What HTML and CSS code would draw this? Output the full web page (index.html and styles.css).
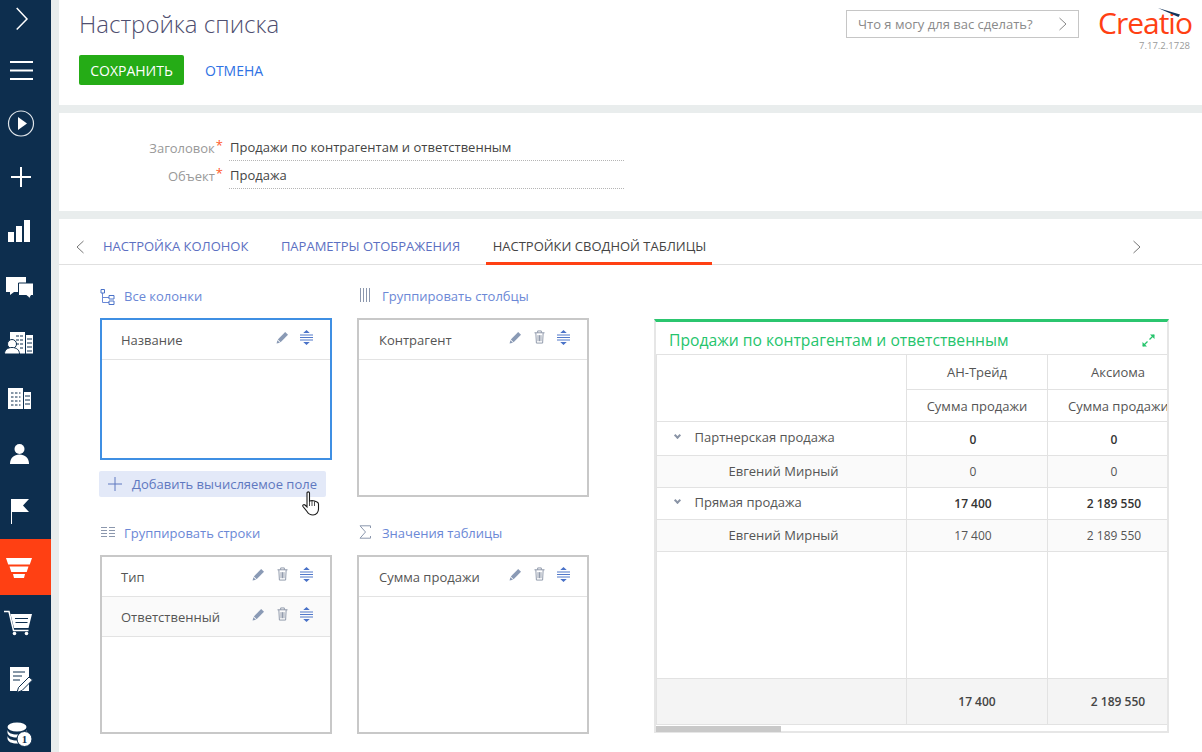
FILE: index.html
```html
<!DOCTYPE html>
<html lang="ru">
<head>
  <meta charset="UTF-8">
  <title>Настройка списка</title>
  <link rel="stylesheet" href="styles.css">
</head>
<body>

  <svg class="defs" width="0" height="0">
    <symbol id="pencil" viewBox="0 0 13 13">
      <path d="M9.200 1 12 3.800 4.600 11.200 1.800 8.400Z" fill="currentColor"/>
      <path d="M1.400 9.200 4 11.700 0.600 12.500Z" fill="currentColor"/>
    </symbol>
    <symbol id="trash" viewBox="0 0 12 15" preserveAspectRatio="none">
      <path d="M.5 3h11M4 3V1h4v2M2 3l.6 11h6.800L10 3M4.400 5.500v6.500M6 5.500v6.500M7.600 5.500v6.500" fill="none" stroke="currentColor"/>
    </symbol>
    <symbol id="sort" viewBox="0 0 14 15" preserveAspectRatio="none">
      <path d="M7 0 10.500 3h-7ZM7 15 3.500 12h7Z" fill="currentColor"/>
      <path d="M0 5h14M0 7.500h14M0 10h14" stroke="currentColor"/>
    </symbol>
    <symbol id="chevron" viewBox="0 0 10 14">
      <path d="M1.500 1 8 7l-6.500 6" fill="none" stroke="currentColor"/>
    </symbol>
  </svg>

  <nav class="sidebar">
    <a class="nav-item nav-top">
      <svg width="51" height="44" viewBox="0 0 51 44"><path d="M16.700 8 27 19 16.700 29.500" fill="none" stroke="#fff" stroke-width="1.500"/></svg>
    </a>
    <a class="nav-item nav-short">
      <svg width="51" height="53" viewBox="0 0 51 53"><path d="M10 18h23M10 26.500h23M10 35h23" stroke="#fff" stroke-width="2"/></svg>
    </a>
    <a class="nav-item nav-short">
      <svg width="51" height="53" viewBox="0 0 51 53"><circle cx="21" cy="26.500" r="12.500" fill="none" stroke="#dfe5ea" stroke-width="1.200"/><path d="M18 20l9 6.500-9 6.500Z" fill="#fff"/></svg>
    </a>
    <a class="nav-item nav-short">
      <svg width="51" height="53" viewBox="0 0 51 53"><path d="M11 27h20M21 17v20" stroke="#fff" stroke-width="2"/></svg>
    </a>
    <a class="nav-item">
      <svg width="51" height="56" viewBox="0 0 51 56"><path d="M8 29h6v10H8ZM16 23h6v16h-6ZM24 17h6v22h-6Z" fill="#fff"/></svg>
    </a>
    <a class="nav-item">
      <svg width="51" height="56" viewBox="0 0 51 56"><path d="M6 18h20v15H14l-4 3v-3H6Z" fill="#fff"/><path d="M18.500 24h15v12.500h-2.500l-1 3-3.500-3h-8Z" fill="#fff" stroke="#0d2e4e"/></svg>
    </a>
    <a class="nav-item">
      <svg width="51" height="56" viewBox="0 0 51 56"><path d="M10 17h15v21.500H10ZM26 20h7v18.500h-7Z" fill="#fff"/><path d="M16 21h3M20 21h3M16 25h3M20 25h3M16 29h3M20 29h3M20 33h3M27 24h5M27 28h5M27 32h5M27 36h5" stroke="#0d2e4e"/><circle cx="12" cy="29" r="4.500" fill="#fff" stroke="#0d2e4e"/><path d="M4.500 39c0-4 3-6.500 7.500-6.500s7.500 2.500 7.500 6.500Z" fill="#fff" stroke="#0d2e4e"/></svg>
    </a>
    <a class="nav-item">
      <svg width="51" height="56" viewBox="0 0 51 56"><path d="M8 17h15v21H8ZM24 21h7v17h-7Z" fill="#fff"/><path d="M11 22h2.500M15 22h2.500M19 22h1.500M11 26h2.500M15 26h2.500M19 26h1.500M11 30h2.500M15 30h2.500M19 30h1.500M11 34h2.500M15 34h2.500M19 34h1.500M25 25h5M25 29h5M25 33h5" stroke="#0d2e4e"/></svg>
    </a>
    <a class="nav-item">
      <svg width="51" height="56" viewBox="0 0 51 56"><circle cx="19.500" cy="22" r="5" fill="#fff"/><path d="M10 37c0-6 4-9.500 9.500-9.500s9.500 3.500 9.500 9.500Z" fill="#fff"/></svg>
    </a>
    <a class="nav-item">
      <svg width="51" height="56" viewBox="0 0 51 56"><path d="M11 16h1v25h-1Z" fill="#fff"/><path d="M12 16h17l-6 6.500 6 6.500H12Z" fill="#fff"/></svg>
    </a>
    <a class="nav-item nav-active">
      <svg width="51" height="56" viewBox="0 0 51 56"><path d="M6 19h26l-2.200 6.500H8.200ZM9.500 27.500h19l-1.800 5.500H11.300ZM13 35h12l-1 4H14Z" fill="#fff"/></svg>
    </a>
    <a class="nav-item">
      <svg width="51" height="56" viewBox="0 0 51 56"><path d="M4 16.500h5l4.500 19h15" fill="none" stroke="#fff" stroke-width="1.500"/><path d="M10.500 19H32l-3.500 14H14Z" fill="#fff"/><path d="M15 23.500h13M15.500 27.500h12" stroke="#0d2e4e"/><circle cx="14.500" cy="38.500" r="1.800" fill="#fff"/><circle cx="26.500" cy="38.500" r="1.800" fill="#fff"/></svg>
    </a>
    <a class="nav-item">
      <svg width="51" height="56" viewBox="0 0 51 56"><path d="M10 16h19v24H10Z" fill="#fff"/><path d="M13 21h12M13 25h9M13 29h7" stroke="#0d2e4e"/><path d="M29 26l3.500 3-10.500 10.500-5 2 1.500-5Z" fill="#fff" stroke="#0d2e4e"/></svg>
    </a>
    <a class="nav-item">
      <svg width="51" height="56" viewBox="0 0 51 56"><ellipse cx="17" cy="20" rx="9.500" ry="4.500" fill="#fff"/><path d="M7.500 23c1 3 4 4.500 9.500 4.500s8.500-1.500 9.500-4.500v3c-1 3-4 4.500-9.500 4.500S8.500 29 7.500 26ZM7.500 29c1 3 4 4.500 9.500 4.500S25.500 32 26.500 29v3c-1 3-4 4.500-9.500 4.500S8.500 35 7.500 32Z" fill="#fff"/><circle cx="24.500" cy="32" r="7.500" fill="#fff" stroke="#0d2e4e"/><text class="coin-num" x="24.500" y="36">1</text></svg>
    </a>
  </nav>

  <main class="page">

    <header class="top">
      <div class="top-left">
        <h1 class="page-title">Настройка списка</h1>
        <div class="actions">
          <button class="btn-save">СОХРАНИТЬ</button>
          <a class="link-cancel">ОТМЕНА</a>
        </div>
      </div>
      <div class="search">
        <span>Что я могу для вас сделать?</span>
        <svg class="search-arrow" width="10" height="14"><use href="#chevron"/></svg>
      </div>
      <div class="logo">
        <svg class="logo-swoosh" width="22" height="9" viewBox="0 0 22 9"><path d="M0 0 22 6.500 20.500 9 9 4Z" fill="#14345a"/></svg>
        <div class="logo-text">Creatio</div>
        <div class="version">7.17.2.1728</div>
      </div>
    </header>

    <section class="form">
      <div class="form-row">
        <label class="form-label">Заголовок<span class="req">*</span></label>
        <div class="form-value">Продажи по контрагентам и ответственным</div>
      </div>
      <div class="form-row">
        <label class="form-label">Объект<span class="req">*</span></label>
        <div class="form-value">Продажа</div>
      </div>
    </section>

    <section class="settings">
      <div class="tabs">
        <svg class="tab-arrow tab-prev" width="10" height="14"><use href="#chevron"/></svg>
        <a class="tab">Настройка колонок</a>
        <a class="tab">Параметры отображения</a>
        <a class="tab tab-active">Настройки сводной таблицы</a>
        <svg class="tab-arrow tab-next" width="10" height="14"><use href="#chevron"/></svg>
      </div>

      <div class="columns">
        <div class="col">
          <div class="col-title">
            <svg class="title-icon" width="16" height="18" viewBox="0 0 16 18"><path d="M2.500 5v9.500H9M2.500 9.500H9" fill="none" stroke="#6b88d6"/><path d="M1 1.500h3.500V5H1ZM9 7.500h5V11H9ZM9 13h5v3.500H9Z" fill="#fff" stroke="#4a72c8"/></svg>
            Все колонки
          </div>
          <div class="panel panel-focus panel-sm">
            <div class="panel-row">
              <span class="row-name">Название</span>
              <svg class="ic ic-pencil"><use href="#pencil"/></svg>
              <svg class="ic ic-sort"><use href="#sort"/></svg>
            </div>
          </div>
          <div class="add-field">
            <svg width="14" height="14" viewBox="0 0 14 14"><path d="M0 7h14M7 0v14" stroke="#5f78c0"/></svg>
            Добавить вычисляемое поле
            <svg class="cursor" width="18" height="26" viewBox="0 0 18 26"><path d="M5 2c0-1.500 2.500-1.500 2.500 0v8l2.500-.5 2.500.5 2.500 1c1 .5 1.500 1 1.500 2v5c0 3-2 6-5.500 6-3 0-4.500-1-6-3.500L1 15.500c-.8-1.200.8-2.500 2-1.500l2 2Z" fill="#fff" stroke="#1c1c1c" stroke-width="1.100"/><path d="M7.500 10v5M10 10v5M12.500 10.500v4.500" stroke="#1c1c1c" stroke-width=".8"/></svg>
          </div>
          <div class="col-title col-title-low">
            <svg class="title-icon" width="16" height="14" viewBox="0 0 16 14"><path d="M1 2.500h6M9 2.500h6M1 5.500h6M9 5.500h6M1 8.500h6M9 8.500h6M1 11.500h6M9 11.500h6" stroke="#8b97ad"/></svg>
            Группировать строки
          </div>
          <div class="panel panel-lg">
            <div class="panel-row">
              <span class="row-name">Тип</span>
              <svg class="ic ic-pencil"><use href="#pencil"/></svg>
              <svg class="ic ic-trash"><use href="#trash"/></svg>
              <svg class="ic ic-sort"><use href="#sort"/></svg>
            </div>
            <div class="panel-row row-alt">
              <span class="row-name">Ответственный</span>
              <svg class="ic ic-pencil"><use href="#pencil"/></svg>
              <svg class="ic ic-trash"><use href="#trash"/></svg>
              <svg class="ic ic-sort"><use href="#sort"/></svg>
            </div>
          </div>
        </div>

        <div class="col col-second">
          <div class="col-title">
            <svg class="title-icon" width="16" height="14" viewBox="0 0 16 14"><path d="M3.500 0v14M6.500 0v14M9.500 0v14M12.500 0v14" stroke="#8b97ad"/></svg>
            Группировать столбцы
          </div>
          <div class="panel panel-lg">
            <div class="panel-row">
              <span class="row-name">Контрагент</span>
              <svg class="ic ic-pencil"><use href="#pencil"/></svg>
              <svg class="ic ic-trash"><use href="#trash"/></svg>
              <svg class="ic ic-sort"><use href="#sort"/></svg>
            </div>
          </div>
          <div class="col-title col-title-low">
            <svg class="title-icon" width="16" height="14" viewBox="0 0 16 14"><path d="M13.500 3V.8H3l5.500 6.200L3 13.200h10.500V11" fill="none" stroke="#8b97ad"/></svg>
            Значения таблицы
          </div>
          <div class="panel panel-lg">
            <div class="panel-row">
              <span class="row-name">Сумма продажи</span>
              <svg class="ic ic-pencil"><use href="#pencil"/></svg>
              <svg class="ic ic-trash"><use href="#trash"/></svg>
              <svg class="ic ic-sort"><use href="#sort"/></svg>
            </div>
          </div>
        </div>

        <div class="pivot">
          <div class="pivot-head">
            <span class="pivot-title">Продажи по контрагентам и ответственным</span>
            <svg width="13" height="13" viewBox="0 0 13 13"><path d="M7.500 5.500 12 1M1 12l4.500-4.500" stroke="#25c46c" stroke-width="1.300"/><path d="M8 .500h4.500V5ZM.500 8v4.500H5Z" fill="#25c46c"/></svg>
          </div>
          <div class="pivot-scroll">
            <table class="pivot-table">
              <colgroup>
                <col class="c-name"><col class="c-val"><col class="c-val">
              </colgroup>
              <tr class="r-head1"><td rowspan="2"></td><td class="cell-head">АН-Трейд</td><td class="cell-head">Аксиома</td></tr>
              <tr class="r-head2"><td class="cell-head">Сумма продажи</td><td class="cell-head cell-clip">Сумма продажи</td></tr>
              <tr class="r-first">
                <td class="cell-group"><span class="caret"></span>Партнерская продажа</td>
                <td class="cell-num cell-bold">0</td><td class="cell-num cell-bold">0</td>
              </tr>
              <tr class="r-child">
                <td class="cell-child">Евгений Мирный</td>
                <td class="cell-num">0</td><td class="cell-num">0</td>
              </tr>
              <tr>
                <td class="cell-group"><span class="caret"></span>Прямая продажа</td>
                <td class="cell-num cell-bold">17 400</td><td class="cell-num cell-bold">2 189 550</td>
              </tr>
              <tr class="r-child">
                <td class="cell-child">Евгений Мирный</td>
                <td class="cell-num">17 400</td><td class="cell-num">2 189 550</td>
              </tr>
              <tr class="r-empty"><td></td><td></td><td></td></tr>
              <tr class="r-total"><td></td><td>17 400</td><td>2 189 550</td></tr>
            </table>
          </div>
          <div class="pivot-bar"><div class="pivot-thumb"></div></div>
        </div>
      </div>
    </section>

  </main>

</body>
</html>
```

FILE: styles.css
```css
* {
  box-sizing: border-box;
}
html, body {
  height: 100%;
}
body {
  margin: 0;
  display: flex;
  height: 752px;
  overflow: hidden;
  background: #e9eded;
  font-family: "Open Sans", sans-serif;
  font-size: 13px;
  color: #444;
}
.defs {
  position: absolute;
}

/* left menu */
.sidebar {
  width: 51px;
  flex: none;
  height: 752px;
  overflow: hidden;
  background: #0d2e4e;
}
.nav-item {
  display: block;
  height: 56px;
}
.nav-item svg {
  display: block;
}
.nav-top {
  height: 44px;
}
.nav-short {
  height: 53px;
}
.nav-active {
  background: #ff4013;
}
.coin-num {
  font-family: "Liberation Serif", serif;
  font-size: 11px;
  font-weight: bold;
  fill: #0d2e4e;
  text-anchor: middle;
}

.page {
  flex: 1;
  margin-left: 8px;
  display: flex;
  flex-direction: column;
  gap: 8px;
}

/* header */
.top {
  height: 105px;
  background: #fff;
  display: flex;
  align-items: flex-start;
  padding-left: 20px;
}
.top-left {
  flex: 1;
}
.page-title {
  margin: 7px 0 0;
  font-size: 24px;
  font-weight: 300;
  line-height: 34px;
  color: #4f4f70;
}
.actions {
  display: flex;
  align-items: center;
  margin-top: 14px;
}
.btn-save {
  width: 105px;
  height: 30px;
  border: none;
  border-radius: 2px;
  background: #25ac16;
  color: #fff;
  font-family: inherit;
  font-size: 14px;
  padding: 0;
}
.link-cancel {
  margin-left: 21px;
  font-size: 14px;
  color: #2f72e4;
}
.search {
  width: 233px;
  height: 28px;
  margin-top: 10px;
  border: 1px solid #c6c6c6;
  display: flex;
  align-items: center;
  justify-content: space-between;
  padding: 0 10px 0 11px;
  color: #8a8a8a;
  font-size: 13px;
}
.search-arrow {
  color: #888;
}
.logo {
  position: relative;
  width: 123px;
  padding: 5px 12px 0 19px;
  text-align: right;
}
.logo-swoosh {
  position: absolute;
  top: 8px;
  left: 79px;
}
.logo-text {
  font-size: 30px;
  line-height: 35px;
  letter-spacing: -1px;
  color: #ff4013;
  text-align: left;
}
.version {
  font-size: 9.500px;
  line-height: 12px;
  color: #9a9a9a;
}

/* form */
.form {
  height: 98px;
  background: #fff;
  padding-top: 20px;
}
.form-row {
  display: flex;
  height: 28px;
  align-items: center;
}
.form-label {
  width: 164px;
  padding-top: 1px;
  text-align: right;
  color: #999;
  font-size: 13px;
}
.req {
  color: #ff5a2b;
  margin-left: 1px;
  position: relative;
  top: -3px;
}
.form-value {
  width: 395px;
  height: 28px;
  margin-left: 6px;
  padding-left: 1px;
  line-height: 28px;
  border-bottom: 1px dotted #b5b5b5;
  color: #444;
}

/* tabs */
.settings {
  flex: 1;
  background: #fff;
}
.tabs {
  position: relative;
  height: 46px;
  display: flex;
  border-bottom: 1px solid #e0e0e0;
  padding-left: 37px;
  align-items: stretch;
}
.tab {
  padding: 0 7px;
  margin-right: 18.500px;
  line-height: 54px;
  text-transform: uppercase;
  font-size: 13px;
  color: #5c70c2;
}
.tab-active {
  color: #444;
  border-bottom: 3px solid #ff4013;
  height: 46px;
  line-height: 54px;
  padding-right: 6px;
}
.tab-arrow {
  position: absolute;
  top: 21px;
  color: #777;
}
.tab-prev {
  left: 16px;
  transform: scaleX(-1);
}
.tab-next {
  left: 1073px;
}

/* columns */
.columns {
  display: flex;
  padding-left: 41px;
  align-items: flex-start;
}
.col {
  width: 232px;
  margin-right: 25px;
}
.col-title {
  position: relative;
  height: 20px;
  margin: 21px 0 12px;
  padding-left: 24px;
  line-height: 20px;
  color: #6b88d6;
}
.col-title-low {
  margin: 26px 0 12px;
}
.col-second .col-title {
  padding-left: 25px;
}
.col-second .panel-row {
  padding-left: 20px;
}
.title-icon {
  position: absolute;
  left: 0;
  top: 2px;
}
.panel {
  border: 2px solid #c8c8c8;
  background: #fff;
}
.panel-sm {
  height: 142px;
}
.panel-lg {
  height: 179px;
}
.panel-focus {
  border-color: #3f8fe3;
}
.panel-row {
  height: 40px;
  display: flex;
  align-items: center;
  padding: 0 17px 0 19px;
  border-bottom: 1px solid #e3e3e3;
}
.row-alt {
  background: #fafafa;
}
.row-name {
  flex: 1;
  margin-top: 1px;
  color: #555;
}
.ic {
  flex: none;
  margin-top: -4px;
}
.ic-pencil {
  width: 13px;
  height: 13px;
  color: #8a9ab5;
}
.ic-trash {
  width: 11px;
  height: 14px;
  margin-left: 12px;
  margin-top: -6px;
  color: #8a94a6;
}
.ic-sort {
  width: 13px;
  height: 15px;
  margin-left: 11px;
  color: #4a72c8;
}
.ic-trash + .ic-sort {
  margin-left: 12px;
}
.add-field {
  position: relative;
  width: 227px;
  height: 26px;
  margin-top: 11px;
  margin-left: -1px;
  border-radius: 2px;
  background: #e3e9f8;
  display: flex;
  align-items: center;
  gap: 10px;
  padding-left: 9px;
  color: #5f78c0;
}
.cursor {
  position: absolute;
  left: 203px;
  top: 20px;
}

/* pivot */
.pivot {
  width: 515px;
  height: 414px;
  margin: 54px 0 0 40px;
  border: 2px solid #e6e6e6;
  border-top: 3px solid #2bc66f;
  background: #fff;
}
.pivot-head {
  height: 32px;
  display: flex;
  align-items: center;
  justify-content: space-between;
  padding: 4px 12px 0 13px;
}
.pivot-title {
  font-size: 15.700px;
  color: #25c46c;
}
.pivot-scroll {
  height: 371px;
  overflow: hidden;
}
.pivot-table {
  border-collapse: collapse;
  table-layout: fixed;
  width: 532px;
}
.c-name {
  width: 250px;
}
.c-val {
  width: 141px;
}
.pivot-table td {
  border: 1px solid #e2e2e2;
  padding: 0;
  white-space: nowrap;
  overflow: hidden;
}
.pivot-table tr {
  height: 32px;
}
.pivot-table .r-head1 {
  height: 35px;
}
.pivot-table .r-first {
  height: 34px;
}
.pivot-table .r-empty {
  height: 127px;
  background: #fff;
}
.pivot-table .r-total {
  height: 46px;
  background: #f4f4f4;
  text-align: center;
  font-size: 12px;
  font-weight: 600;
  color: #444;
}
.r-child {
  background: #fafafa;
}
.pivot-table .cell-head {
  text-align: center;
  color: #555;
}
.pivot-table .cell-clip {
  text-align: left;
  padding-left: 20px;
}
.pivot-table .cell-group {
  padding: 0 0 3px 37.500px;
  position: relative;
  color: #555;
}
.caret {
  position: absolute;
  left: 18px;
  top: calc(50% - 6px);
  width: 5px;
  height: 5px;
  border-right: 2px solid #8a94a6;
  border-bottom: 2px solid #8a94a6;
  transform: rotate(45deg);
}
.pivot-table .cell-child {
  padding: 0 0 1px 71.500px;
  color: #555;
}
.pivot-table .cell-num {
  text-align: center;
  padding-right: 8px;
  font-size: 12px;
  color: #555;
}
.pivot-table .r-first .cell-num {
  padding-top: 2px;
}
.pivot-table .cell-bold {
  font-weight: 600;
  color: #333;
}
.pivot-bar {
  height: 6px;
  margin-top: 1px;
}
.pivot-thumb {
  width: 125px;
  height: 6px;
  background: #c9c9c9;
}
```
